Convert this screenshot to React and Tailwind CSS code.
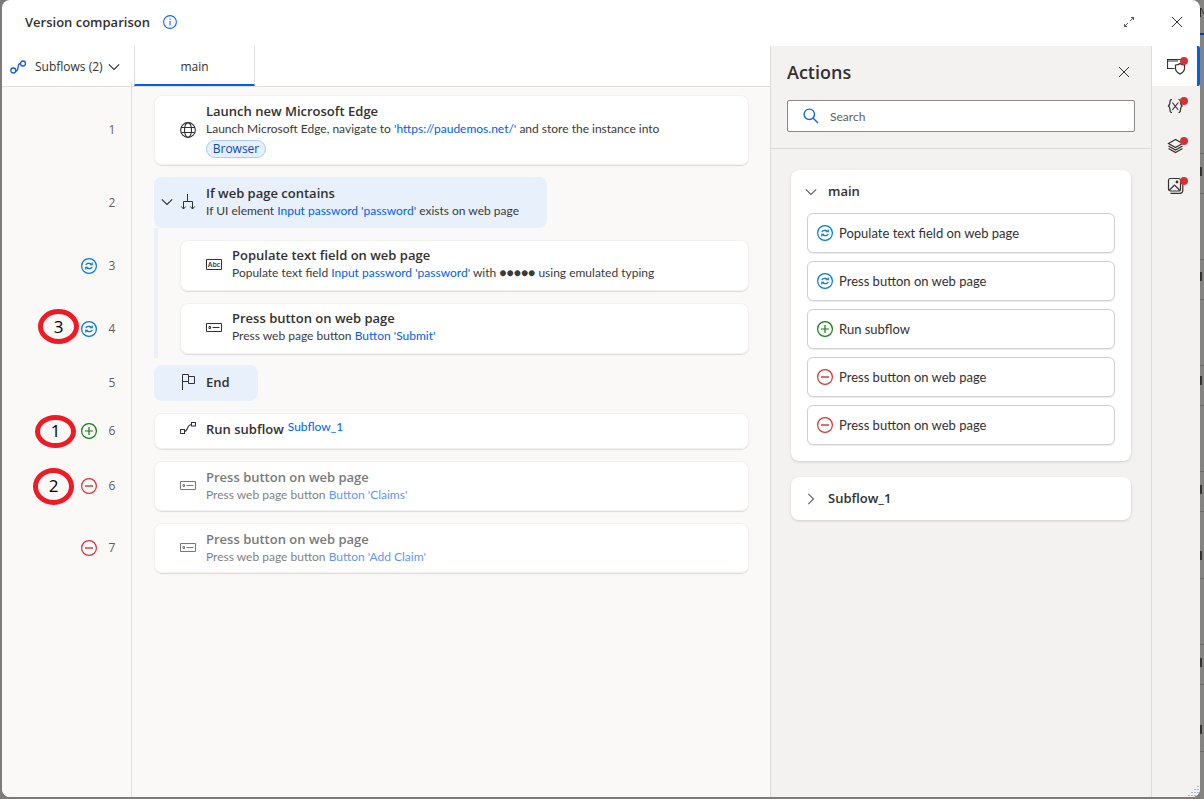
import React from "react";

const SYNC = "sync";
const ADD = "add";
const REMOVE = "remove";

function StatusIcon({ kind }) {
  if (kind === ADD)
    return (
      <svg className="size-4 shrink-0" viewBox="0 0 16 16" fill="none" stroke="#107c10" aria-label="Added">
        <circle cx="8" cy="8" r="7.4" strokeWidth="1.2" />
        <path d="M8 4v8M4 8h8" strokeWidth="1.2" />
      </svg>
    );
  if (kind === REMOVE)
    return (
      <svg className="size-4 shrink-0" viewBox="0 0 16 16" fill="none" stroke="#d13438" aria-label="Removed">
        <circle cx="8" cy="8" r="7.4" strokeWidth="1.2" />
        <path d="M4 8h8" strokeWidth="1.4" />
      </svg>
    );
  return (
    <svg className="size-4 shrink-0" viewBox="0 0 16 16" fill="none" stroke="#0078d4" aria-label="Modified">
      <circle cx="8" cy="8" r="7.4" strokeWidth="1.2" />
      <path d="M4.800 7C5.400 5.400 8.400 4.600 10.600 6.200M11.200 9C10.600 10.600 7.600 11.400 5.400 9.800" strokeWidth="1.2" />
      <path d="M11.300 4.500v2.200H8.800M4.700 11.500V9.300H7.200" strokeWidth="1.1" />
    </svg>
  );
}

function Chevron({ className }) {
  return (
    <svg className={className} viewBox="0 0 12 12" fill="none" stroke="currentColor" strokeWidth="1.1">
      <path d="M.8 3.300 6 8.500l5.200-5.200" />
    </svg>
  );
}

function Cross({ className }) {
  return (
    <svg className={className} viewBox="0 0 12 12" fill="none" stroke="#323130" strokeWidth="1">
      <path d="M1 1l10 10M11 1 1 11" />
    </svg>
  );
}

function GlobeIcon() {
  return (
    <svg className="size-4" viewBox="0 0 16 16" fill="none" stroke="#323130" strokeWidth="1.100">
      <circle cx="8" cy="8" r="7.400" />
      <ellipse cx="8" cy="8" rx="3.500" ry="7.400" />
      <path d="M1.300 5.500h13.400M1.300 10.500h13.400" />
    </svg>
  );
}

function BranchIcon() {
  return (
    <svg className="size-4" viewBox="0 0 16 16" fill="none" stroke="#323130" strokeWidth="1">
      <path d="M7.500 0v7.500M3.500 15V7.500h9V15M1.300 12.500l2.200 2.500 2.200-2.500M10.300 12.500l2.200 2.500 2.200-2.500" />
    </svg>
  );
}

function TextBoxIcon() {
  return (
    <svg className="size-4" viewBox="0 0 16 16" fill="none" stroke="#323130" strokeWidth="1">
      <path d="M.5 3.500h15v10H.5z" />
      <text x="8" y="11" textAnchor="middle" fontSize="7" fontWeight="600" fontFamily="Open Sans" fill="#323130" stroke="none">
        Abc
      </text>
    </svg>
  );
}

function ButtonIcon() {
  return (
    <svg className="size-4" viewBox="0 0 16 16" fill="none" stroke="#323130" strokeWidth="1">
      <path d="M.5 4.500h15v8H.5zM6.500 8.500h7M3 7.500h1.500v2H3z" />
    </svg>
  );
}

function FlagIcon() {
  return (
    <svg className="size-4" viewBox="0 0 16 16" fill="none" stroke="#323130" strokeWidth="1">
      <path d="M2.500 16V.500h6v7h-6M8.500 2.500h6v7h-6v-2" />
    </svg>
  );
}

function SubflowIcon() {
  return (
    <svg className="size-4" viewBox="0 0 16 16" fill="none" stroke="#323130" strokeWidth="1.100">
      <path d="M.5 8.500h4v4h-4zM11.500 1.500h4v3.500h-4zM4.500 10.500C8 10.500 7 3.500 11.500 3.500" />
    </svg>
  );
}

function Link({ children }) {
  return (
    <a href="#" className="text-[#0060ee]">
      {children}
    </a>
  );
}

const steps = [
  {
    no: 1,
    icon: GlobeIcon,
    title: "Launch new Microsoft Edge",
    tall: true,
    text: (
      <>
        Launch Microsoft Edge, navigate to <Link>'https://paudemos.net/'</Link> and store the instance into
      </>
    ),
    chip: "Browser",
  },
  {
    no: 2,
    icon: BranchIcon,
    block: true,
    title: "If web page contains",
    text: (
      <>
        If UI element <Link>Input password 'password'</Link> exists on web page
      </>
    ),
  },
  {
    no: 3,
    icon: TextBoxIcon,
    nested: true,
    status: SYNC,
    title: "Populate text field on web page",
    text: (
      <>
        Populate text field <Link>Input password 'password'</Link> with ●●●●● using emulated typing
      </>
    ),
  },
  {
    no: 4,
    icon: ButtonIcon,
    nested: true,
    lastNested: true,
    status: SYNC,
    mark: { label: "3", place: "left-9 top-[6px] h-[35px]" },
    title: "Press button on web page",
    text: (
      <>
        Press web page button <Link>Button 'Submit'</Link>
      </>
    ),
  },
  { no: 5, icon: FlagIcon, end: true, title: "End" },
  {
    no: 6,
    icon: SubflowIcon,
    status: ADD,
    mark: { label: "1", place: "left-[33px] h-[33px]" },
    title: "Run subflow",
    inline: "Subflow_1",
  },
  {
    no: 6,
    icon: ButtonIcon,
    status: REMOVE,
    removed: true,
    mark: { label: "2", place: "left-[31px] h-[37px]" },
    title: "Press button on web page",
    text: (
      <>
        Press web page button <Link>Button 'Claims'</Link>
      </>
    ),
  },
  {
    no: 7,
    icon: ButtonIcon,
    status: REMOVE,
    removed: true,
    title: "Press button on web page",
    text: (
      <>
        Press web page button <Link>Button 'Add Claim'</Link>
      </>
    ),
  },
];

function cardClass(s) {
  if (s.block) return "w-[393px] max-w-full bg-[#e8f0fb] h-[51px] pb-[2px]";
  if (s.end) return "w-[104px] bg-[#e8f0fb] h-9 pb-[2px]";
  const base = "flex-1 bg-white shadow-[inset_0_0_0_1px_#f3f1ef,0_1px_1px_rgba(0,0,0,0.12)] ";
  if (s.tall) return base + "h-[70px]";
  if (s.inline) return base + "h-9 pb-1";
  if (s.removed) return base + "h-[50px] pb-[2px]";
  return base + "h-[51px] pb-1";
}

function Step({ s }) {
  const Icon = s.icon;
  const pad = s.end ? "pt-[7px]" : s.lastNested ? "pt-3 pb-1" : "pt-3";
  return (
    <li className="flex">
      <div className={"flex w-[130px] shrink-0 border-r border-[#e1dfdd] " + pad}>
        <div className="relative flex flex-1 items-center justify-end gap-[7px] pr-[11px]">
          {s.mark && (
            <span
              className={
                "absolute flex w-[41px] items-center justify-center rounded-[50%] border-[5px] border-[#ed1c24] text-[17px] text-black " +
                s.mark.place
              }
            >
              {s.mark.label}
            </span>
          )}
          {s.status && <StatusIcon kind={s.status} />}
          <span className="w-4 text-center text-xs text-[#605e5c]">{s.no}</span>
        </div>
      </div>
      <div className="flex min-w-0 flex-1 pr-[21px] pl-[22px]">
        <div className={"flex flex-1 " + pad + (s.nested ? " border-l-4 border-[#e8f0fb] pl-[22px]" : "")}>
          <div className={"flex min-w-0 items-center rounded-lg " + cardClass(s)}>
            <div className={"flex min-w-0 items-center " + (s.removed ? "opacity-65" : "")}>
              <span className="flex w-[26px] shrink-0 justify-center text-[#323130]">
                {s.block && <Chevron className="size-3" />}
              </span>
              <span className="mr-[10px] shrink-0">
                <Icon />
              </span>
              <div className="min-w-0">
                <h3 className="flex gap-1 text-[13px] leading-[18px] font-semibold whitespace-nowrap text-[#323130]">
                  {s.title}
                  {s.inline && (
                    <span className="font-['Lato','Open_Sans',sans-serif] text-xs leading-[14px] font-normal">
                      <Link>{s.inline}</Link>
                    </span>
                  )}
                </h3>
                {s.text && (
                  <p className="mt-px font-['Lato','Open_Sans',sans-serif] text-xs leading-4 whitespace-nowrap text-[#3b3a39]">
                    {s.text}
                  </p>
                )}
                {s.chip && (
                  <span className="mt-[3px] flex h-[18px] w-[60px] items-center justify-center rounded-full border border-[#a9cbfa] bg-[#e5effd] text-xs text-[#0f48b0]">
                    {s.chip}
                  </span>
                )}
              </div>
            </div>
          </div>
        </div>
      </div>
    </li>
  );
}

const changes = [
  [SYNC, "Populate text field on web page"],
  [SYNC, "Press button on web page"],
  [ADD, "Run subflow"],
  [REMOVE, "Press button on web page"],
  [REMOVE, "Press button on web page"],
];

function ActionsPanel() {
  return (
    <aside className="flex w-[382px] shrink-0 flex-col border-x border-[#dddbd9] bg-[#f3f2f1]">
      <div className="border-b border-[#dddbd9] px-4 pb-4">
        <div className="flex h-[54px] items-center justify-between pb-[3px]">
          <h2 className="text-lg font-semibold text-[#323130]">Actions</h2>
          <button type="button" aria-label="Close panel" className="flex w-[22px] items-center justify-center">
            <Cross className="size-3" />
          </button>
        </div>
        <label className="flex h-8 items-center gap-[11px] rounded-[2px] border border-[#8a8886] bg-white px-[15px]">
          <svg className="size-4 shrink-0" viewBox="0 0 16 16" fill="none" stroke="#1267e8" strokeWidth="1.400">
            <circle cx="6.300" cy="6.300" r="5.200" />
            <path d="m10 10 5 5" />
          </svg>
          <input
            type="search"
            aria-label="Search"
            placeholder="Search"
            className="min-w-0 flex-1 bg-transparent pt-[2px] font-['Lato','Open_Sans',sans-serif] text-xs text-[#323130] outline-none placeholder:text-[#605e5c]"
          />
        </label>
      </div>
      <div className="flex flex-col gap-4 px-5 pt-[21px]">
        <section className="rounded-lg bg-white px-4 pb-4 shadow-[0_1px_3px_rgba(0,0,0,0.15)]">
          <button type="button" aria-expanded="true" className="-ml-[2px] flex h-[43px] items-center gap-[11px] text-[13px] font-semibold text-[#323130]">
            <Chevron className="size-3 text-[#605e5c]" />
            main
          </button>
          <ul className="flex flex-col gap-2">
            {changes.map(([kind, label], i) => (
              <li key={i}>
                <button
                  type="button"
                  className="flex h-10 w-full items-center gap-[6px] rounded-md border border-[#d2d0ce] bg-white px-[9px] font-['Lato','Open_Sans',sans-serif] text-[13px] text-[#323130] shadow-[0_1px_1px_rgba(0,0,0,0.08)]"
                >
                  <StatusIcon kind={kind} />
                  <span className="pt-[2px]">{label}</span>
                </button>
              </li>
            ))}
          </ul>
        </section>
        <section className="rounded-lg bg-white px-4 shadow-[0_1px_3px_rgba(0,0,0,0.15)]">
          <button type="button" aria-expanded="false" className="-ml-[2px] flex h-[43px] items-center gap-[11px] text-[13px] font-semibold text-[#323130]">
            <Chevron className="size-3 -rotate-90 text-[#605e5c]" />
            Subflow_1
          </button>
        </section>
      </div>
    </aside>
  );
}

const railItems = [
  {
    label: "Actions",
    art: (
      <>
        <path d="M7.500 12.500H.500v-9h15.500v2.500M.500 5H11" />
        <path d="M8.500 9c2 0 3.500-.500 4.500-1.500C14 8.500 15.500 9 17.500 9v3.500c0 2.500-2 4.200-4.500 5.500-2.500-1.300-4.500-3-4.500-5.500z" fill="#fff" />
      </>
    ),
  },
  {
    label: "Variables",
    art: (
      <path d="M5 3.500c-2 0-2 1-2 2.500s0 3.500-2 4c2 .500 2 2.500 2 4s0 2.500 2 2.500M11.500 3.500c2 0 2 1 2 2.500s0 3.500 2 4c-2 .500-2 2.500-2 4s0 2.500-2 2.500M5.300 6.500l6 7.500M11.300 6.500l-6 7.500" />
    ),
  },
  {
    label: "UI elements",
    art: <path d="M8.500 3.500 1.500 7.500l7 4 7-4zM1.500 10l7 4 7-4M1.500 12.500l7 4 7-4" />,
  },
  {
    label: "Images",
    art: (
      <>
        <rect x="1.500" y="2.500" width="12" height="12.500" rx="2" />
        <path d="M3.500 17.300h9.500a2.800 2.800 0 0 0 2.800-2.800V6M2.500 14l5-5 5 5" />
        <circle cx="10" cy="6" r=".8" fill="#323130" />
      </>
    ),
  },
];

function Rail() {
  return (
    <nav className="flex w-12 shrink-0 flex-col bg-[#f3f2f1]">
      {railItems.map((it, i) => (
        <button
          key={it.label}
          type="button"
          aria-label={it.label}
          className={
            "flex h-10 items-center pl-[15px] " +
            (i === 0 ? "rounded-r-[2px] border-r-[3px] border-[#0060ee] bg-white" : "")
          }
        >
          <span className="relative">
            <svg className="size-5" viewBox="0 0 20 20" fill="none" stroke="#323130" strokeWidth="1.200">
              {it.art}
            </svg>
            <span className="absolute top-[1px] left-[13px] size-2 rounded-full bg-[#d13438]" />
          </span>
        </button>
      ))}
    </nav>
  );
}

function BackdropEdge() {
  return (
    <svg className="w-1 shrink-0" viewBox="0 0 4 799" preserveAspectRatio="xMinYMin slice" aria-hidden="true">
      <rect width="4" height="799" fill="#858483" />
      <path d="M.500 8v9M1 8l3 6" stroke="#2b2b2b" fill="none" />
      <rect y="33" width="4" height="2" fill="#0a3a94" />
      <path
        d="M0 153.500h4M0 193.500h4M0 259.500h4M0 299.500h4M0 365.500h4M0 405.500h4M0 471.500h4M0 511.500h4M0 578.500h4M0 644.500h4M0 684.500h4M0 751.500h4"
        stroke="#6d6c6b"
      />
      <path
        d="M1 167v9M1 272v9M1 376v9M1 485v9M1 551v9M1 658v9M1 725v9"
        stroke="#333"
        strokeWidth="2"
      />
    </svg>
  );
}

export default function App() {
  return (
    <div className="flex min-h-screen bg-[#7d7c7b] pl-[2px] font-['Open_Sans','Noto_Sans',sans-serif] text-[#323130]">
      <main className="relative mb-[2px] flex min-w-0 flex-1 flex-col overflow-hidden rounded-lg bg-white">
        <header className="flex h-[46px] items-center pr-[13px] pl-[23px]">
          <h1 className="text-[13px] font-semibold">Version comparison</h1>
          <button type="button" aria-label="Information" className="ml-[13px] pb-[2px]">
            <svg className="size-[14px]" viewBox="0 0 14 14" fill="none" stroke="#1267e8" strokeWidth="1.100">
              <circle cx="7" cy="7" r="6.400" />
              <path d="M7 6v4.500M7 3.500v1.300" />
            </svg>
          </button>
          <button type="button" aria-label="Expand" className="ml-auto pb-[2px]">
            <svg className="size-[10px]" viewBox="0 0 10 10" fill="none" stroke="#323130" strokeWidth=".8">
              <path d="M6 4l3.500-3.500M7 .500h2.500v2.500M4 6 .500 9.500M.500 7v2.500h2.500" />
            </svg>
          </button>
          <button type="button" aria-label="Close" className="ml-[33px] flex size-5 items-center justify-center pb-[2px]">
            <Cross className="size-3" />
          </button>
        </header>
        <div className="flex flex-1">
          <div className="flex min-w-0 flex-1 flex-col bg-[#faf9f8]">
            <div className="flex h-[41px] border-b border-[#e1dfdd] bg-white">
              <button type="button" className="flex w-[132px] items-center pt-[2px] pl-2 text-xs font-medium">
                <svg className="mr-2 size-[17px]" viewBox="0 0 17 17" fill="none" stroke="#0f5ce8" strokeWidth="1.300">
                  <circle cx="3.300" cy="11.500" r="2.500" />
                  <circle cx="13" cy="4.500" r="2.500" />
                  <path d="M5.800 12C9.500 12 6.500 4.500 10.500 4.500" />
                </svg>
                Subflows (2)
                <Chevron className="ml-[5px] size-3" />
              </button>
              <button
                type="button"
                className="h-10 w-[121px] border-x border-b-2 border-x-[#e1dfdd] border-b-[#0060ee] pt-1 text-xs font-medium"
              >
                main
              </button>
            </div>
            <ol className="-mt-1">
              {steps.map((s, i) => (
                <Step key={i} s={s} />
              ))}
            </ol>
            <div className="w-[130px] flex-1 border-r border-[#e1dfdd]" />
          </div>
          <ActionsPanel />
          <Rail />
        </div>
        <svg className="absolute right-0 bottom-0 size-3" viewBox="0 0 12 12" fill="#a9b4cf" aria-hidden="true">
          <path d="M9 1h2v1H9zM6 4h2v1H6zM9 4h2v1H9zM3 7h2v1H3zM6 7h2v1H6zM9 7h2v1H9zM0 10h2v1H0zM3 10h2v1H3zM6 10h2v1H6z" />
        </svg>
      </main>
      <BackdropEdge />
    </div>
  );
}
